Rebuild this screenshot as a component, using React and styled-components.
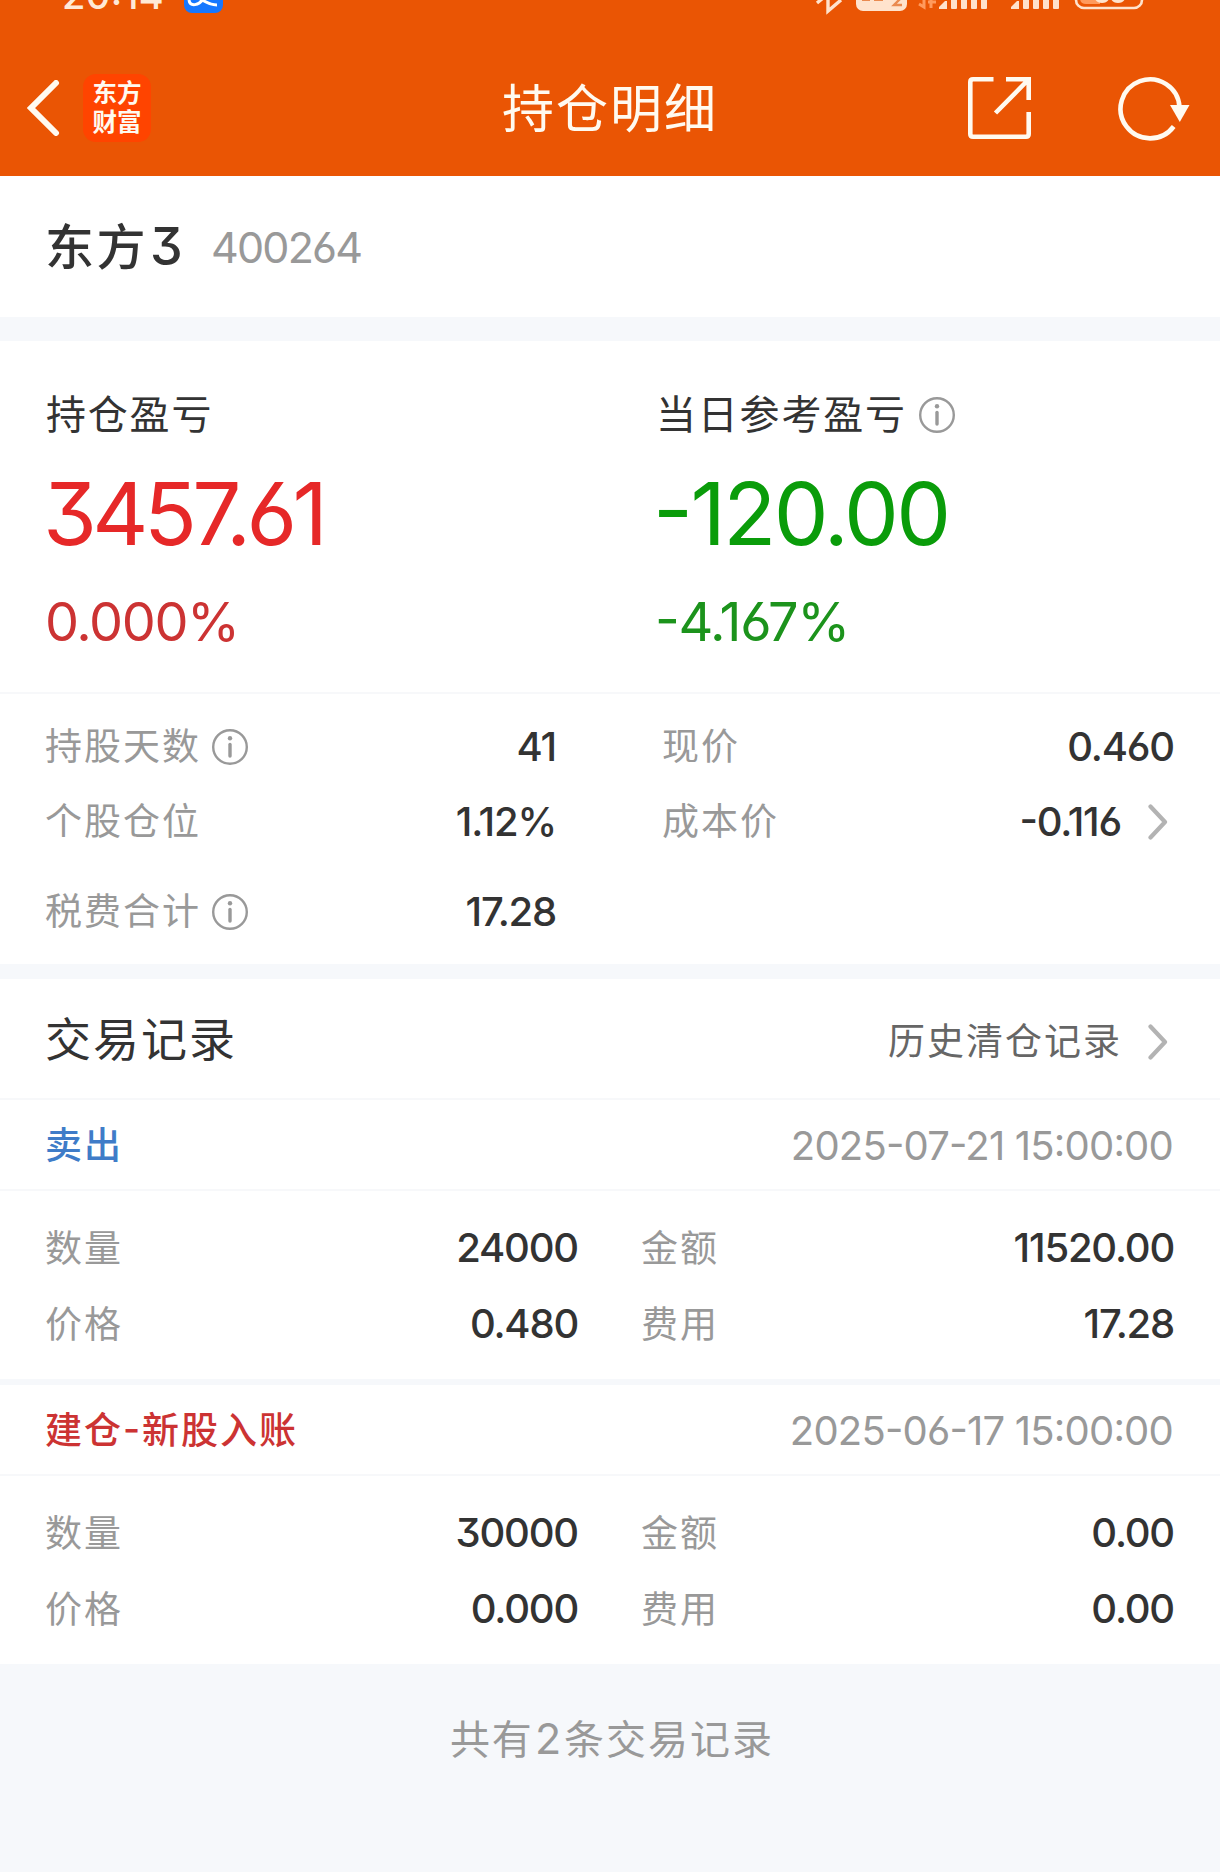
import styled, { createGlobalStyle } from "styled-components";

const GlobalStyle = createGlobalStyle`
  * {
    box-sizing: border-box;
  }
  body {
    margin: 0;
    background-color: #f6f8fb;
    font-family: "Inter", "Noto Sans CJK SC", sans-serif;
    font-feature-settings: "cv09", "cv03", "cv04", "case";
  }
`;

const sellRecord = [
  ["数量", "24000", "金额", "11520.00"],
  ["价格", "0.480", "费用", "17.28"],
];

const openRecord = [
  ["数量", "30000", "金额", "0.00"],
  ["价格", "0.000", "费用", "0.00"],
];

const InfoIcon = () => {
  return (
    <svg width="36" height="36" viewBox="0 0 36 36" fill="none">
      <circle cx="18" cy="18" r="16.8" stroke="#999" strokeWidth="2.4" />
      <circle cx="18" cy="9.2" r="2.2" fill="#999" />
      <path d="M18 15.5V27" stroke="#999" strokeWidth="3.4" strokeLinecap="round" />
    </svg>
  );
};

const Arrow = () => {
  return (
    <svg width="20" height="36" viewBox="0 0 20 36" fill="none">
      <path d="M2.5 2.500L17 18L2.500 33.500" stroke="#b3b3b3" strokeWidth="4.200" strokeLinecap="round" strokeLinejoin="round" />
    </svg>
  );
};

const StatusIcons = () => {
  return (
    <svg width="340" height="18" viewBox="815 0 340 18" fill="none">
      <path d="M817 3L823 -2M828 -3V11L841 0" stroke="#ffe3cd" strokeWidth="3.4" />
      <rect x="856" y="-20" width="51" height="31" rx="7" fill="#ffe3cd" />
      <path d="M862 0h8M874 0h9" stroke="#ea8a50" strokeWidth="2" />
      <path d="M893 -2h8l-7 7h8" stroke="#ea8a50" strokeWidth="2.4" />
      <path d="M919 4l5 3V-2M931 -2V8M928 2h8" stroke="#ff9a5c" strokeWidth="3" />
      <g fill="#ffe3cd">
        <path d="M939 9V7L945 1H947V9z" />
        <rect x="951" y="-4" width="6" height="13" rx="1" />
        <rect x="961" y="-4" width="6" height="13" rx="1" />
        <rect x="971" y="-4" width="6" height="13" rx="1" />
        <rect x="981" y="-4" width="6" height="13" rx="1" />
        <path d="M1011 9V7L1017 1H1019V9z" />
        <rect x="1023" y="-4" width="6" height="13" rx="1" />
        <rect x="1033" y="-4" width="6" height="13" rx="1" />
        <rect x="1043" y="-4" width="6" height="13" rx="1" />
        <rect x="1053" y="-4" width="6" height="13" rx="1" />
      </g>
      <rect x="1076" y="-20" width="66" height="28" rx="8" stroke="#ffe3cd" strokeWidth="2.6" />
      <path d="M1080 -2h20v6h-14q-6 0 -6 -6z" fill="#ff9a5c" />
      <path d="M1096 -3q1 4.500 6 4.500t6 -4.500M1112 -3q1 4.500 6 4.500t6 -4.500" stroke="#ffe3cd" strokeWidth="3" />
    </svg>
  );
};

const Records = ({ rows }) => {
  return (
    <RecordBody>
      {rows.map(([leftLabel, left, rightLabel, right]) => (
        <RecordRow key={leftLabel}>
          <Label>{leftLabel}</Label>
          <Value>{left}</Value>
          <Label $indent="64px">{rightLabel}</Label>
          <Value>{right}</Value>
        </RecordRow>
      ))}
    </RecordBody>
  );
};

const App = () => {
  return (
    <Page>
      <GlobalStyle />
      <Header>
        <StatusBar>
          <StatusLeft>
            <Clock>20:14</Clock>
            <svg width="40" height="14" viewBox="0 0 40 14">
              <rect x="0" y="-26" width="39" height="39" rx="8" fill="#1677ff" />
              <path d="M5 0c1 7 10 6 15 -2M13 -3c7 4 12 8 20 8" stroke="#fff" strokeWidth="3" fill="none" />
            </svg>
          </StatusLeft>
          <StatusIcons />
        </StatusBar>
        <NavBar>
          <NavSide>
            <svg width="33" height="56" viewBox="0 0 33 56" fill="none">
              <path d="M29 3L4 28L29 53" stroke="#fffaf0" strokeWidth="6" strokeLinecap="round" />
            </svg>
            <Logo>
              <span>东方</span>
              <span>财富</span>
            </Logo>
          </NavSide>
          <NavTitle>持仓明细</NavTitle>
          <NavSide $end>
            <svg width="64" height="64" viewBox="0 0 64 64" fill="none" stroke="#fffaf0" strokeWidth="4.6">
              <path d="M25.500 3.300H5Q2.300 3.300 2.300 6V58Q2.300 60.700 5 60.700H58Q60.700 60.700 60.700 58V36" />
              <path d="M38 3.300H60.700V24M60 4L27.500 37" />
            </svg>
            <svg width="72" height="66" viewBox="0 0 72 66" fill="none">
              <path d="M55.700 51.500A29.500 29.500 0 1 1 61.500 32" stroke="#fffaf0" strokeWidth="4.600" />
              <path d="M52 30H71.500L61.800 47z" fill="#fffaf0" />
            </svg>
          </NavSide>
        </NavBar>
      </Header>

      <StockBar>
        <StockName>
          东方<StockDigit>3</StockDigit>
        </StockName>
        <StockCode>400264</StockCode>
      </StockBar>
      <Gap $height="24px" />

      <Summary>
        <Profit $color="#e62828">
          <ProfitTitle>持仓盈亏</ProfitTitle>
          <ProfitValue $spacing="-4.6px">3457.61</ProfitValue>
          <ProfitRate $color="#cc3333">0.000%</ProfitRate>
        </Profit>
        <Profit $color="#0a9c0a">
          <ProfitTitle>
            当日参考盈亏
            <InfoIcon />
          </ProfitTitle>
          <ProfitValue $spacing="-2.6px">-120.00</ProfitValue>
          <ProfitRate $color="#1c931c">-4.167%</ProfitRate>
        </Profit>
      </Summary>

      <Stats>
        <StatRow $height="75px">
          <Label>
            持股天数
            <InfoIcon />
          </Label>
          <Value>41</Value>
          <Label $indent="107px">现价</Label>
          <Value>0.460</Value>
        </StatRow>
        <StatRow $height="75px">
          <Label>个股仓位</Label>
          <Value>1.12%</Value>
          <Label $indent="107px">成本价</Label>
          <Value>
            -0.116
            <Arrow />
          </Value>
        </StatRow>
        <StatRow $height="105px">
          <Label>
            税费合计
            <InfoIcon />
          </Label>
          <Value>17.28</Value>
        </StatRow>
      </Stats>
      <Gap $height="15px" />

      <ListHead>
        <ListTitle>交易记录</ListTitle>
        <HistoryLink>
          历史清仓记录
          <Arrow />
        </HistoryLink>
      </ListHead>
      <RecordHead>
        <RecordType $color="#3f7cc8">卖出</RecordType>
        <RecordTime>2025-07-21 15:00:00</RecordTime>
      </RecordHead>
      <Records rows={sellRecord} />
      <Gap $height="6px" />
      <RecordHead>
        <RecordType $color="#cc3333">建仓-新股入账</RecordType>
        <RecordTime>2025-06-17 15:00:00</RecordTime>
      </RecordHead>
      <Records rows={openRecord} />
      <Footer>
        共有<FooterCount>2</FooterCount>条交易记录
      </Footer>
    </Page>
  );
};

export default App;

const Page = styled.div`
  width: 1220px;
  height: 1872px;
  overflow: hidden;
  background-color: #f6f8fb;
  color: #333;
  white-space: nowrap;
`;

const Header = styled.header`
  height: 176px;
  background-color: #ea5504;
  color: #fffaf0;
`;

const StatusBar = styled.div`
  display: flex;
  justify-content: space-between;
  height: 40px;
  padding: 0 65px 0 62px;
  overflow: hidden;
`;

const StatusLeft = styled.div`
  display: flex;
  align-items: flex-start;
  gap: 20px;
`;

const Clock = styled.div`
  width: 102px;
  margin-top: -26px;
  font-size: 38px;
  line-height: 42px;
  font-weight: 500;
  letter-spacing: 0.4px;
  color: #ffe9d6;
`;

const NavBar = styled.div`
  display: grid;
  grid-template-columns: 1fr auto 1fr;
  align-items: center;
  height: 136px;
  padding: 0 30px 0 27px;
`;

const NavSide = styled.div`
  display: flex;
  align-items: center;
  justify-content: ${(props) => (props.$end ? "flex-end" : "flex-start")};
  gap: ${(props) => (props.$end ? "86px" : "23px")};
`;

const Logo = styled.div`
  display: flex;
  flex-direction: column;
  align-items: center;
  justify-content: center;
  width: 68px;
  height: 68px;
  border-radius: 13px;
  background-color: #ff4400;
  font-size: 24.5px;
  line-height: 29px;
  font-weight: 700;
`;

const NavTitle = styled.h1`
  margin: 0;
  padding: 4px 0 0 3px;
  font-size: 52px;
  line-height: 60px;
  font-weight: 400;
  letter-spacing: 2px;
`;

const StockBar = styled.div`
  display: flex;
  align-items: center;
  height: 141px;
  padding-left: 45px;
  background-color: #fff;
`;

const StockName = styled.div`
  width: 166px;
  padding-top: 2px;
  font-size: 49px;
  line-height: 60px;
  font-weight: 450;
  letter-spacing: 2.5px;
`;

const StockDigit = styled.span`
  margin-left: 2px;
  font-size: 52px;
`;

const StockCode = styled.div`
  font-size: 43px;
  line-height: 60px;
  letter-spacing: -1.8px;
  color: #999;
`;

const Gap = styled.div`
  height: ${(props) => props.$height};
  background-color: #f6f8fb;
`;

const Summary = styled.section`
  display: grid;
  grid-template-columns: 610px 1fr;
  height: 353px;
  padding: 44px 0 0 46px;
  border-bottom: 2px solid #f7f8fa;
  background-color: #fff;
`;

const Profit = styled.div`
  color: ${(props) => props.$color};
`;

const ProfitTitle = styled.div`
  display: flex;
  align-items: center;
  gap: 12px;
  font-size: 40px;
  line-height: 60px;
  letter-spacing: 1.8px;
  color: #333;
`;

const ProfitValue = styled.div`
  margin: 19px 0 0 -3px;
  font-size: 87px;
  line-height: 100px;
  letter-spacing: ${(props) => props.$spacing};
`;

const ProfitRate = styled.div`
  margin: 28px 0 0 -1px;
  font-size: 54px;
  line-height: 60px;
  letter-spacing: -1.4px;
  color: ${(props) => props.$color};
`;

const Stats = styled.section`
  height: 270px;
  padding: 15px 46px 0;
  background-color: #fff;
`;

const StatRow = styled.div`
  display: grid;
  grid-template-columns: 250px 260px 300px 318px;
  align-items: center;
  height: ${(props) => props.$height};
`;

const Label = styled.div`
  display: flex;
  align-items: center;
  gap: 11px;
  padding-top: 1px;
  padding-left: ${(props) => props.$indent || 0};
  margin-left: -1px;
  font-size: 37px;
  line-height: 60px;
  letter-spacing: 2px;
  color: #999;
`;

const Value = styled.div`
  display: flex;
  align-items: center;
  justify-content: flex-end;
  gap: 27px;
  font-size: 40px;
  line-height: 60px;
  font-weight: 450;
  letter-spacing: -1.2px;

  svg {
    margin-right: 6px;
  }
`;

const ListHead = styled.div`
  display: flex;
  align-items: center;
  justify-content: space-between;
  height: 121px;
  padding: 0 52px 0 45px;
  border-bottom: 2px solid #f7f8fa;
  background-color: #fff;
`;

const ListTitle = styled.h2`
  margin: 0;
  font-size: 46px;
  line-height: 60px;
  font-weight: 400;
  letter-spacing: 2px;
`;

const HistoryLink = styled.div`
  display: flex;
  align-items: center;
  gap: 26px;
  padding-top: 6px;
  font-size: 37px;
  line-height: 60px;
  letter-spacing: 2px;
  color: #666;
`;

const RecordHead = styled.div`
  display: flex;
  align-items: center;
  justify-content: space-between;
  height: 91px;
  padding: 2px 47px 0 45px;
  border-bottom: 2px solid #f7f8fa;
  background-color: #fff;
`;

const RecordType = styled.div`
  font-size: 37px;
  line-height: 60px;
  font-weight: 500;
  letter-spacing: 2px;
  color: ${(props) => props.$color};
`;

const RecordTime = styled.div`
  font-size: 40px;
  line-height: 60px;
  letter-spacing: -0.8px;
  color: #999;
`;

const RecordBody = styled.div`
  height: 188px;
  padding-top: 19px;
  background-color: #fff;
`;

const RecordRow = styled.div`
  display: grid;
  grid-template-columns: 200px 332px 260px 336px;
  align-items: center;
  height: 76px;
  padding: 0 46px;
`;

const Footer = styled.footer`
  padding: 44px 0 0 4px;
  font-size: 40px;
  line-height: 60px;
  letter-spacing: 2px;
  text-align: center;
  color: #999;
`;

const FooterCount = styled.span`
  margin: 0 1px;
  font-size: 43px;
`;
